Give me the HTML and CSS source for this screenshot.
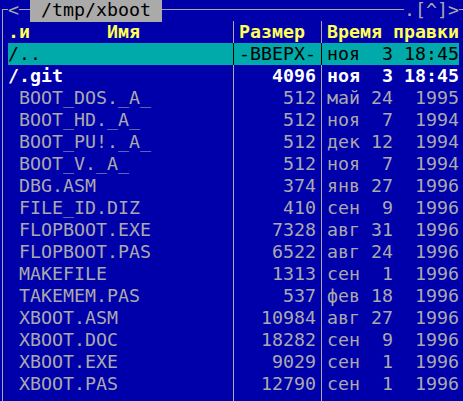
FILE: index.html
```html
<!DOCTYPE html>
<html lang="ru">
<head>
<meta charset="utf-8">
<title>mc panel</title>
<link rel="stylesheet" href="styles.css">
</head>
<body>
<div class="panel">
  <div class="top">
    <i class="corner"></i><span class="g">&lt;</span><i class="h"></i><span class="title"> /tmp/xboot </span><i class="h"></i><span class="g">.[^]&gt;</span><i class="corner right"></i>
  </div>
  <div class="row head">
    <i class="v"></i><span class="n">.и       Имя</span><i class="v"></i><span class="s left">Размер</span><i class="v"></i><span class="d">Время правки</span><i class="v"></i>
  </div>
  <div class="row sel">
    <i class="v"></i><span class="n">/..</span><i class="v"></i><span class="s">-ВВЕРХ-</span><i class="v"></i><span class="d">ноя  3 18:45</span><i class="v"></i>
  </div>
  <div class="row dir">
    <i class="v"></i><span class="n">/.git</span><i class="v"></i><span class="s">4096</span><i class="v"></i><span class="d">ноя  3 18:45</span><i class="v"></i>
  </div>
  <div class="row"><i class="v"></i><span class="n"> BOOT_DOS._A_</span><i class="v"></i><span class="s">512</span><i class="v"></i><span class="d">май 24  1995</span><i class="v"></i></div>
  <div class="row"><i class="v"></i><span class="n"> BOOT_HD._A_</span><i class="v"></i><span class="s">512</span><i class="v"></i><span class="d">ноя  7  1994</span><i class="v"></i></div>
  <div class="row"><i class="v"></i><span class="n"> BOOT_PU!._A_</span><i class="v"></i><span class="s">512</span><i class="v"></i><span class="d">дек 12  1994</span><i class="v"></i></div>
  <div class="row"><i class="v"></i><span class="n"> BOOT_V._A_</span><i class="v"></i><span class="s">512</span><i class="v"></i><span class="d">ноя  7  1994</span><i class="v"></i></div>
  <div class="row"><i class="v"></i><span class="n"> DBG.ASM</span><i class="v"></i><span class="s">374</span><i class="v"></i><span class="d">янв 27  1996</span><i class="v"></i></div>
  <div class="row"><i class="v"></i><span class="n"> FILE_ID.DIZ</span><i class="v"></i><span class="s">410</span><i class="v"></i><span class="d">сен  9  1996</span><i class="v"></i></div>
  <div class="row"><i class="v"></i><span class="n"> FLOPBOOT.EXE</span><i class="v"></i><span class="s">7328</span><i class="v"></i><span class="d">авг 31  1996</span><i class="v"></i></div>
  <div class="row"><i class="v"></i><span class="n"> FLOPBOOT.PAS</span><i class="v"></i><span class="s">6522</span><i class="v"></i><span class="d">авг 24  1996</span><i class="v"></i></div>
  <div class="row"><i class="v"></i><span class="n"> MAKEFILE</span><i class="v"></i><span class="s">1313</span><i class="v"></i><span class="d">сен  1  1996</span><i class="v"></i></div>
  <div class="row"><i class="v"></i><span class="n"> TAKEMEM.PAS</span><i class="v"></i><span class="s">537</span><i class="v"></i><span class="d">фев 18  1996</span><i class="v"></i></div>
  <div class="row"><i class="v"></i><span class="n"> XBOOT.ASM</span><i class="v"></i><span class="s">10984</span><i class="v"></i><span class="d">авг 27  1996</span><i class="v"></i></div>
  <div class="row"><i class="v"></i><span class="n"> XBOOT.DOC</span><i class="v"></i><span class="s">18282</span><i class="v"></i><span class="d">сен  9  1996</span><i class="v"></i></div>
  <div class="row"><i class="v"></i><span class="n"> XBOOT.EXE</span><i class="v"></i><span class="s">9029</span><i class="v"></i><span class="d">сен  1  1996</span><i class="v"></i></div>
  <div class="row"><i class="v"></i><span class="n"> XBOOT.PAS</span><i class="v"></i><span class="s">12790</span><i class="v"></i><span class="d">сен  1  1996</span><i class="v"></i></div>
  <div class="row"><i class="v"></i><span class="n"></span><i class="v"></i><span class="s"></span><i class="v"></i><span class="d"></span><i class="v"></i></div>
</div>
</body>
</html>
```
FILE: styles.css
```css
html, body {
  margin: 0;
  padding: 0;
  background: #0000aa;
  overflow: hidden;
  height: 100%;
}
body {
  font-family: "DejaVu Sans Mono", "Liberation Mono", monospace;
  font-size: 18.27px;
  line-height: 22px;
  color: #aaaaaa;
}
.panel {
  margin-left: -3px;
  margin-top: -1px;
  width: 473px;
}
.top, .row {
  display: grid;
  height: 22px;
  white-space: pre;
}
.top {
  grid-template-columns: 11px 11px 11px 132px 242px 55px 11px;
}
.row {
  grid-template-columns: 11px 220px 11px 77px 11px 132px 11px;
}
i { display: block; font-style: normal; position: relative; }
.g { color: #aaaaaa; }
.title { background: #aaaaaa; color: #000000; }
.h {
  background: linear-gradient(#aaaaaa, #aaaaaa) 0 10px / 100% 1px no-repeat;
}
.corner::before {
  content: "";
  display: block;
  margin-left: 5px;
  margin-top: 10px;
  height: 12px;
  border-left: 1px solid #aaaaaa;
  border-top: 1px solid #aaaaaa;
}
.corner.right::before {
  margin-left: 0;
  width: 5px;
  border-left: none;
  border-right: 1px solid #aaaaaa;
}
.v::before {
  content: "";
  display: block;
  margin-left: 5px;
  width: 1px;
  height: 22px;
  background: #aaaaaa;
}
.n, .d { text-align: left; }
.s { text-align: right; }
.s.left { text-align: left; }
.head { color: #ffff55; font-weight: bold; }
.dir { color: #ffffff; font-weight: bold; }
.sel .n, .sel .s, .sel .d, .sel .v:not(:first-child):not(:last-child) {
  background: #00aaaa;
  color: #000000;
}
.sel .v:not(:first-child):not(:last-child)::before { background: #000000; }
```
